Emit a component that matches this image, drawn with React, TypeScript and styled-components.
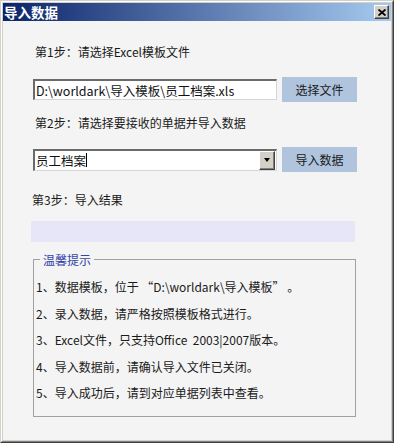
import styled, { createGlobalStyle } from 'styled-components'

const GlobalStyle = createGlobalStyle`
    * { box-sizing: border-box; }
    body {
        margin: 0;
        background: #d4d0c8;
        font-family: "Noto Sans CJK SC", "Open Sans", sans-serif;
    }
`;

const Window = styled.div`
    width: 394px;
    height: 443px;
    border: 1px solid;
    border-color: #d4d0c8 #404040 #404040 #d4d0c8;
    background: #d4d0c8;
`;
const Frame = styled.div`
    height: 100%;
    border: 1px solid;
    border-color: #ffffff #808080 #808080 #ffffff;
    padding: 1px;
    display: flex;
    flex-direction: column;
`;
const TitleBar = styled.div`
    height: 18px;
    flex: none;
    display: flex;
    align-items: center;
    justify-content: space-between;
    padding: 0 2px 0 1px;
    background: linear-gradient(to right, #0a246a, #a6caf0);
`;
const Title = styled.span`
    color: #fff;
    font-size: 13.5px;
    font-weight: 700;
    line-height: 18px;
`;
const CloseButton = styled.div`
    width: 15px;
    height: 14px;
    background: #d4d0c8;
    border: 1px solid;
    border-color: #fff #404040 #404040 #fff;
    box-shadow: inset -1px -1px 0 #808080;
    display: flex;
    align-items: center;
    justify-content: center;
`;
const Body = styled.div`
    flex: 1;
    background: #f4f4f4;
    padding: 23px 0 0 28px;
    display: flex;
    flex-direction: column;
    align-items: flex-start;
    color: #1a1a1a;
`;
const StepLabel = styled.div<{ $indent: number; $top: number }>`
    margin: ${p => p.$top}px 0 0 ${p => p.$indent}px;
    font-size: 12px;
    line-height: 16px;
`;
const Row = styled.div<{ $top: number }>`
    margin: ${p => p.$top}px 0 0 2px;
    height: 25px;
    display: flex;
    align-items: center;
    gap: 5px;
`;
const TextBox = styled.div<{ $h: number }>`
    width: 244px;
    height: ${p => p.$h}px;
    background: #fff;
    border-top: 2px solid #6a6a6a;
    border-left: 2px solid #6a6a6a;
    border-right: 1px solid #d6d6d6;
    border-bottom: 1px solid #d6d6d6;
    display: flex;
    align-items: center;
    padding-left: 1px;
    font-size: 12.5px;
    color: #111;
    white-space: nowrap;
    overflow: hidden;
`;
const Caret = styled.span`
    width: 1px;
    height: 14px;
    background: #000;
`;
const DropArrow = styled.div`
    margin-left: auto;
    width: 16px;
    height: 19px;
    margin-right: 1px;
    background: #d4d0c8;
    border: 1px solid;
    border-color: #fff #404040 #404040 #fff;
    box-shadow: inset -1px -1px 0 #808080;
    display: flex;
    align-items: center;
    justify-content: center;
    &::after {
        content: "";
        border-left: 3.5px solid transparent;
        border-right: 3.5px solid transparent;
        border-top: 4px solid #000;
    }
`;
const Button = styled.div`
    width: 75px;
    height: 25px;
    background: #b0c4de;
    display: flex;
    align-items: center;
    justify-content: center;
    font-size: 12px;
    color: #1a1a1a;
`;
const Progress = styled.div`
    margin-top: 13px;
    width: 324px;
    height: 21px;
    background: #e6e6f8;
`;
const Notice = styled.div`
    position: relative;
    margin: 17px 0 0 2px;
    width: 323px;
    height: 158px;
    border: 1px solid #a0a0a0;
    padding: 19px 0 0 2px;
    display: flex;
    flex-direction: column;
    gap: 10.5px;
`;
const Legend = styled.span`
    position: absolute;
    top: -8px;
    left: 6px;
    padding: 0 3px;
    background: #f4f4f4;
    color: #3344aa;
    font-size: 12px;
    line-height: 16px;
`;
const Tip = styled.div`
    font-size: 12px;
    line-height: 16px;
    white-space: pre;
`;

const tips = [
    '1、数据模板，位于 “D:\\worldark\\导入模板” 。',
    '2、录入数据，请严格按照模板格式进行。',
    '3、Excel文件，只支持Office  2003|2007版本。',
    '4、导入数据前，请确认导入文件已关闭。',
    '5、导入成功后，请到对应单据列表中查看。',
];

const App = () => {
  return (
    <>
      <GlobalStyle />
      <Window>
        <Frame>
          <TitleBar>
            <Title>导入数据</Title>
            <CloseButton>
              <svg width="8" height="7" viewBox="0 0 8 7">
                <path d="M0.5 0.5 L7.5 6.5 M7.5 0.5 L0.5 6.5" stroke="#000" strokeWidth="1.8" />
              </svg>
            </CloseButton>
          </TitleBar>
          <Body>
            <StepLabel $indent={4} $top={0}>第1步：请选择Excel模板文件</StepLabel>
            <Row $top={17}>
              <TextBox $h={21}>D:\worldark\导入模板\员工档案.xls</TextBox>
              <Button>选择文件</Button>
            </Row>
            <StepLabel $indent={4} $top={13}>第2步：请选择要接收的单据并导入数据</StepLabel>
            <Row $top={16}>
              <TextBox $h={22}>
                员工档案<Caret />
                <DropArrow />
              </TextBox>
              <Button>导入数据</Button>
            </Row>
            <StepLabel $indent={1} $top={20}>第3步：导入结果</StepLabel>
            <Progress />
            <Notice>
              <Legend>温馨提示</Legend>
              {tips.map(t => <Tip key={t}>{t}</Tip>)}
            </Notice>
          </Body>
        </Frame>
      </Window>
    </>
  )
}

export default App;
